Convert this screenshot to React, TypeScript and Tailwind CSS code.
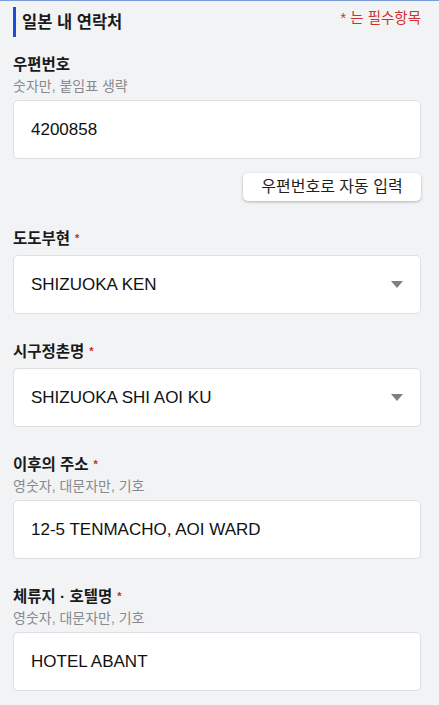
import React from "react";

interface Field {
  label: string;
  hint?: string;
  value: string;
  required?: boolean;
  select?: boolean;
}

const fields: Field[] = [
  { label: "도도부현", value: "SHIZUOKA KEN", required: true, select: true },
  { label: "시구정촌명", value: "SHIZUOKA SHI AOI KU", required: true, select: true },
  { label: "이후의 주소", hint: "영숫자, 대문자만, 기호", value: "12-5 TENMACHO, AOI WARD", required: true },
  { label: "체류지 · 호텔명", hint: "영숫자, 대문자만, 기호", value: "HOTEL ABANT", required: true },
];

const font = "font-['Liberation_Sans','Noto_Sans_CJK_KR',sans-serif]";

const Label: React.FC<{ label: string; hint?: string; required?: boolean }> = ({ label, hint, required }) => (
  <div className={hint ? "mb-[5px]" : "mb-[6px]"}>
    <div className="flex items-center h-5 text-[15.5px] font-bold text-[#1a1a1a] leading-5">
      <span>{label}</span>
      {required && <span className="ml-[5px] text-[11px] text-[#c62828] -mt-[3px]">*</span>}
    </div>
    {hint && <div className="mt-[2px] text-[14px] leading-[18px] text-[#8a8a8e]">{hint}</div>}
  </div>
);

const Box: React.FC<{ value: string; select?: boolean }> = ({ value, select }) => (
  <div className="flex items-center justify-between h-[59px] bg-white border border-[#dedfe2] rounded-[5px] pl-[17px] pr-[15px]">
    <span className="text-[17px] text-[#111]">{value}</span>
    {select && (
      <svg width="12" height="7" viewBox="0 0 12 7" className="mr-[2px]">
        <path d="M0 0 H12 L6 7 Z" fill="#7f7f7f" />
      </svg>
    )}
  </div>
);

export default function App() {
  return (
    <div className={`${font} min-h-[705px] bg-[#f2f3f5] border-t border-[#7a9bd8] pl-[13px] pr-[18px]`}>
      {/* Section header */}
      <div className="flex items-start justify-between pt-[6px]">
        <div className="flex items-center h-[30px]">
          <div className="w-[3px] h-[30px] bg-[#1d4ed8]" />
          <h2 className="ml-[6px] text-[16.5px] font-bold text-[#1a1a1a]">일본 내 연락처</h2>
        </div>
        <span className="mt-[1px] text-[14.5px] text-[#d32f2f] leading-5">* 는 필수항목</span>
      </div>

      {/* Postal code */}
      <div className="mt-[18px]">
        <Label label="우편번호" hint="숫자만, 붙임표 생략" />
        <Box value="4200858" />
        <div className="flex justify-end mt-[14px]">
          <button className="h-[28px] w-[178px] bg-white rounded-[5px] shadow-[0_1px_3px_rgba(0,0,0,0.28)] text-[16px] text-[#1f1f1f]">
            우편번호로 자동 입력
          </button>
        </div>
      </div>

      {fields.map((f, i) => (
        <div key={i} className="mt-[28px]">
          <Label label={f.label} hint={f.hint} required={f.required} />
          <Box value={f.value} select={f.select} />
        </div>
      ))}
    </div>
  );
}
